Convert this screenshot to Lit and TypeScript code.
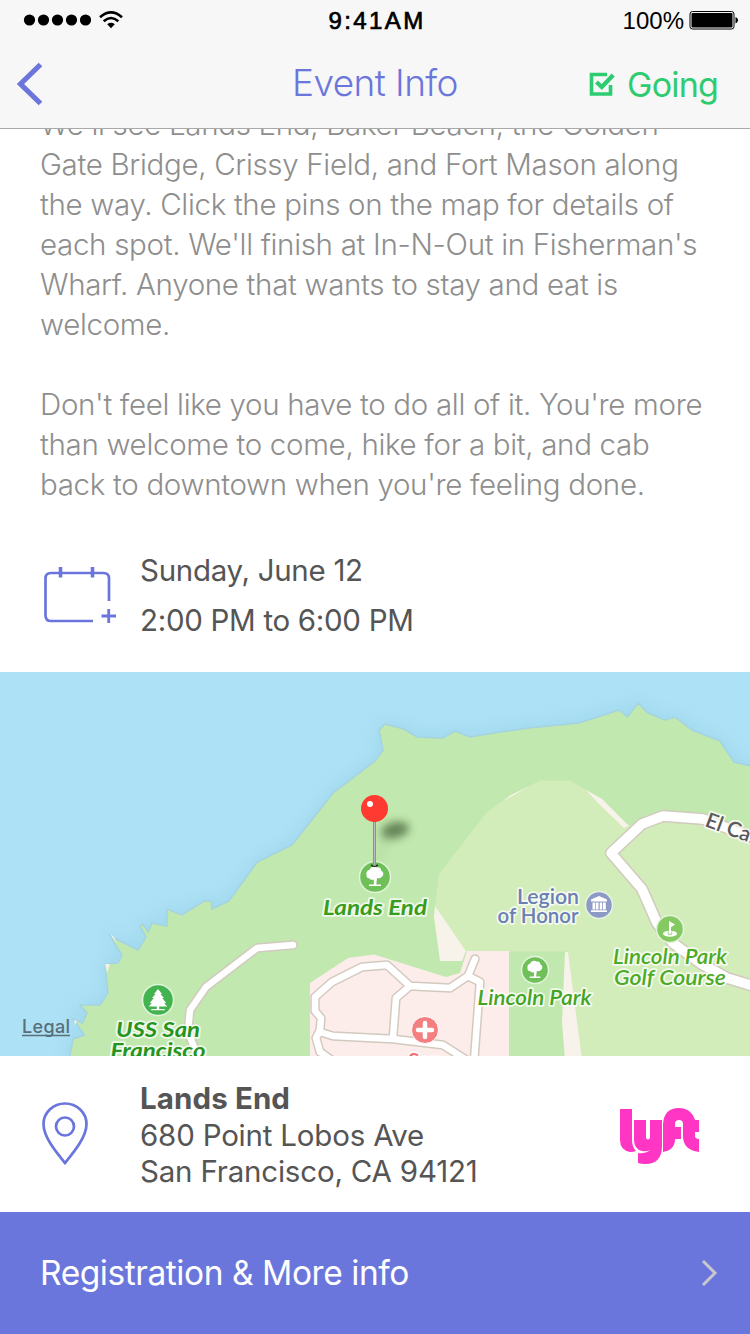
import { LitElement, html, css, svg } from "lit";
import { customElement } from "lit/decorators.js";

const DESCRIPTION = [
  "We'll see Lands End, Baker Beach, the Golden",
  "Gate Bridge, Crissy Field, and Fort Mason along",
  "the way. Click the pins on the map for details of",
  "each spot. We'll finish at In-N-Out in Fisherman's",
  "Wharf. Anyone that wants to stay and eat is",
  "welcome.",
  "",
  "Don't feel like you have to do all of it. You're more",
  "than welcome to come, hike for a bit, and cab",
  "back to downtown when you're feeling done.",
];

const COAST =
  "M69 1060L73 1039L84.5 1035L73 1019L82.5 1023L87 1013L80 1005L100 1005L108 993L105 964L118 963L122 955L109 934L114 938L138 950L146 937L140 926L143 924L148 932L152 923L167 926L167 909L182 915L204 901L211.500 901L212 909L229 901L250 872L257 862L292 845L333 793L375 761L383 750L379 730L385 724L404 729L417 737L443 738L455 731L470 737L500 732L529 728L579 723L619 710L627.500 717L638 703L648 713L665 720L675 717L692 730L720 741L734 762L760 768V1070H69Z";

const ROADS = [
  "M293 945L257 948L206 987L190 1010L188 1032L194 1047L204 1062",
  "M475 959L468 976L450 988L410 986L387 965L362 967L332 982L315 997L315 1011L321 1018L320 1030L316 1038L320 1052L340 1066",
  "M320 1032L333 1036L393 1039L443 1045L468 1061",
  "M410 986L396 998L393 1038",
  "M468 976L480 982L474 1062",
];
const MAIN_ROAD =
  "M765 842L727 828L703 819L663 816L642 824L611 853L642 889L657 923L673 943L700 963L727 978L760 988";

@customElement("event-map")
class EventMap extends LitElement {
  static styles = css`
    :host { display: block; height: 384px; }
    .map { display: block; width: 100%; height: 100%; }
    .road { fill: none; stroke-linejoin: round; stroke-linecap: round; }
    .edge { stroke: #d2cabf; }
    .core { stroke: #fff; }
    .label {
      font-family: Lato, "Open Sans", sans-serif;
      font-weight: 600;
      font-size: 21px;
      text-anchor: middle;
      paint-order: stroke;
      stroke: #fff;
      stroke-opacity: 0.75;
      stroke-width: 3.500px;
      stroke-linejoin: round;
    }
    .slant { font-style: italic; }
    .strong { font-weight: 700; }
    .street { text-anchor: start; }
    .legal {
      font: 500 18px Inter, sans-serif;
      fill: #586f78;
    }
  `;

  private tree(x: number, y: number, k: number) {
    return svg`<g transform="translate(${x} ${y}) scale(${k})" fill="#fff">
      <path d="M-8.500-2c-.6-3 1-5 3-5 1-3.500 5-4.500 7.500-2.600 3-.4 4.200 1.600 4.200 3.300 2.600 1 3 4.600.4 6.300-1 1.500-3 1.600-4.600 1L1.300 7.500H6V9H-6V7.500H-1.200V2.500C-3 3.200-5 2.700-5.500 1.200-7.500 1.500-8.800 0-8.500-2Z"/>
    </g>`;
  }

  render() {
    return html`<svg class="map" viewBox="0 672 750 384" role="img" aria-label="Map of Lands End">
      <defs>
        <filter id="shore" x="-10%" y="-10%" width="120%" height="120%"><feGaussianBlur stdDeviation="9" /></filter>
        <filter id="soft" x="-60%" y="-100%" width="220%" height="300%"><feGaussianBlur stdDeviation="4" /></filter>
      </defs>
      <rect y="672" width="750" height="384" fill="#ade1f6" />
      <path d=${COAST} fill="#90cde0" stroke="#90cde0" stroke-width="6" opacity=".45" filter="url(#shore)" />
      <path d=${COAST} fill="#c1e8ae" stroke="#a5d3df" stroke-width="1.500" />
      <path d="M110 934L114 937L117 944ZM105 964H110L107 973ZM74 1020L77 1021L75 1025Z" fill="#f3f0e6" />
      <path d="M439 874L487 812L508 797L540 780.500H570L590 792L628 826L663 816L703 819L765 842V1060H509V951H466L435 906Z" fill="#d2ecba" />
      <path d="M503 801L511 795L530 786L507 799ZM586 790L602 799L629 826L624 828L598 803ZM435 906L466 951L462 961H440L434 917Z" fill="#f8f3ea" />
      <path d="M310 983L348 958L374 954.500L446 977L460 973L467 951H509V1060H310Z" fill="#fcedea" />
      <path d="M509 951.500H567V1060H509Z" fill="#c1e8ae" />
      <path d="M565 952H568L582 1060H565L562 1022Z" fill="#f8f3ea" />
      ${ROADS.map((d) => svg`<path class="road edge" d=${d} stroke-width="9.500"/>`)}
      ${ROADS.map((d) => svg`<path class="road core" d=${d} stroke-width="6.500"/>`)}
      <path class="road edge" d=${MAIN_ROAD} stroke-width="12.500" />
      <path class="road core" d=${MAIN_ROAD} stroke-width="9.500" />

      <circle cx="158" cy="1000" r="15.500" fill="#42b34f" stroke="#e2f4dc" stroke-width="1.500" />
      <path fill="#fff" d="M158 989l4 5h-1.500l3.500 4h-1.800l4 5h-2l3 3.500h-8v2.500h5.500v1.300h-13.400v-1.300h5.500v-2.500h-8l3-3.500h-2l4-5h-1.800l3.500-4h-1.500z" />
      <text class="label slant strong" x="158" y="1036.500" fill="#259421" textLength="84" lengthAdjust="spacingAndGlyphs">USS San</text>
      <text class="label slant strong" x="158" y="1058" fill="#259421" textLength="95" lengthAdjust="spacingAndGlyphs">Francisco</text>

      <circle cx="375" cy="877" r="15.500" fill="#6fc058" stroke="#e2f4dc" stroke-width="1.500" />
      ${this.tree(375, 877, 1)}
      <text class="label slant strong" x="375" y="914.500" fill="#389d1b" textLength="104" lengthAdjust="spacingAndGlyphs">Lands End</text>
      <path d="M375 866l7-18q-7-16 9-22 20-6 18 2-3 8-21 13l-9 24z" fill="#426a35" opacity=".13" filter="url(#soft)" />
      <ellipse cx="395" cy="830" rx="14" ry="8" transform="rotate(-12 395 830)" fill="#34502c" opacity=".6" filter="url(#soft)" />
      <path d="M371 865q3.500 2.500 7 0" fill="none" stroke="#223a20" stroke-width="1.600" />
      <path d="M374.500 820V866" stroke="#8d8d92" stroke-width="3" />
      <path d="M374.500 822V865" stroke="#b9b9be" stroke-width="1.200" />
      <circle cx="374.500" cy="808.500" r="13.500" fill="#ff3a30" />
      <circle cx="370" cy="804" r="3" fill="#fff" />

      <circle cx="535" cy="970" r="13.500" fill="#6fc058" stroke="#e2f4dc" stroke-width="1.500" />
      ${this.tree(535, 970, 0.88)}
      <text class="label slant" x="534.500" y="1004.500" fill="#43a423" textLength="114" lengthAdjust="spacingAndGlyphs">Lincoln Park</text>

      <text class="label" x="548" y="903.500" fill="#6a80b4" textLength="62" lengthAdjust="spacingAndGlyphs">Legion</text>
      <text class="label" x="538" y="923" fill="#6a80b4" textLength="81" lengthAdjust="spacingAndGlyphs">of Honor</text>
      <circle cx="599" cy="905" r="13.500" fill="#8c9ac5" stroke="#e8f3df" stroke-width="1.500" />
      <path fill="#fff" d="M599 896l8 3.500v2h-16v-2zM592.500 902.500h2.800v7h-2.800zM596 902.500h2.500v7h-2.500zM599.700 902.500h2.500v7h-2.500zM603 902.500h2.800v7h-2.800zM591 910.300h16v1.800h-16z" />

      <circle cx="670" cy="929" r="13.500" fill="#84c962" stroke="#e2f4dc" stroke-width="1.500" />
      <ellipse cx="670" cy="933.700" rx="7" ry="3" fill="#fff" />
      <path d="M669 921l6 3.500-4 2.800v6.700h-2z" fill="#fff" />
      <path d="M668.200 931.500v2.800h3.600v-2.800" fill="none" stroke="#84c962" stroke-width=".8" />
      <text class="label slant" x="670" y="963.500" fill="#4cab25" textLength="114" lengthAdjust="spacingAndGlyphs">Lincoln Park</text>
      <text class="label slant" x="670" y="984.500" fill="#4cab25" textLength="112" lengthAdjust="spacingAndGlyphs">Golf Course</text>

      <circle cx="425" cy="1030" r="13.500" fill="#f37f80" stroke="#fff" stroke-width="1" />
      <path d="M425 1023v14M418 1030h14" stroke="#fff" stroke-width="4.500" stroke-linecap="round" />
      <text class="label" x="425" y="1067.500" fill="#ef6e70" textLength="34" lengthAdjust="spacingAndGlyphs">San</text>

      <text class="label street" transform="translate(704 826) rotate(20)" fill="#5a5a58">El Camino</text>
      <text class="legal" x="22" y="1033" textLength="48">Legal</text>
      <path d="M22 1035.500H70" stroke="#586f78" stroke-width="1.500" />
    </svg>`;
  }
}

@customElement("app-root")
class AppRoot extends LitElement {
  static styles = css`
    :host {
      display: flex;
      flex-direction: column;
      width: 750px;
      height: 1334px;
      overflow: hidden;
      background: #fff;
      color: #555;
      font-family: Inter, "Open Sans", sans-serif;
      white-space: nowrap;
    }
    * { box-sizing: border-box; }
    svg { display: block; flex: none; }
    .header {
      flex: none;
      height: 129px;
      background: #f7f7f7;
      border-bottom: 1px solid #a9a9a9;
    }
    .status, .nav {
      display: grid;
      grid-template-columns: 1fr auto 1fr;
      align-items: center;
    }
    .status {
      height: 40px;
      padding: 0 11px 0 23px;
      color: #000;
      font: 24px "Liberation Sans", sans-serif;
    }
    .signal { display: flex; align-items: center; gap: 8px; }
    .time {
      letter-spacing: 2.400px;
      -webkit-text-stroke: 0.7px #000;
      margin-left: -8px;
      padding-top: 2px;
    }
    .battery { display: flex; align-items: center; justify-content: flex-end; gap: 5px; }
    .percent { padding-top: 2px; }
    .nav { height: 88px; padding: 0 32px 0 16px; }
    .title {
      margin: 0;
      padding: 0 0 3px 16px;
      color: #6b76dc;
      font-size: 37px;
      font-weight: 300;
      letter-spacing: -0.6px;
    }
    .going {
      display: flex;
      align-items: center;
      justify-content: flex-end;
      gap: 12px;
      color: #2ecc71;
      font-size: 34px;
      letter-spacing: -0.8px;
    }
    .scroll { flex: none; height: 543px; overflow: hidden; padding: 0 40px; }
    .description {
      margin: -25px 0 41px;
      color: #8e8e8e;
      font-size: 29.500px;
      font-weight: 300;
      letter-spacing: -0.320px;
      line-height: 40px;
    }
    .line { height: 40px; }
    .when {
      display: grid;
      grid-template-columns: 100px 1fr;
      font-size: 29.500px;
      letter-spacing: -0.300px;
      line-height: 50px;
    }
    .calendar { margin: 20px 0 0 3px; }
    .where {
      flex: none;
      height: 156px;
      display: grid;
      grid-template-columns: 100px 1fr auto;
      align-items: center;
      padding: 0 50px 0 40px;
      font-size: 29.500px;
      letter-spacing: -0.200px;
      line-height: 36.500px;
    }
    .address { padding-top: 2px; }
    .place { font-weight: 700; letter-spacing: 0.100px; }
    .footer {
      flex: none;
      height: 122px;
      display: flex;
      align-items: center;
      justify-content: space-between;
      padding: 0 32px 0 40px;
      background: #6b76dc;
      color: #fff;
      font-size: 33.500px;
      letter-spacing: -0.440px;
    }
  `;

  render() {
    return html`
      <header class="header">
        <div class="status">
          <div class="signal">
            <svg width="68" height="12" viewBox="0 0 68 12">
              ${[6.5, 20.5, 34.5, 48.5, 62.5].map((x) => svg`<circle cx=${x} cy="6" r="5.600"/>`)}
            </svg>
            <svg width="24" height="18" viewBox="0 0 24 18">
              <g fill="none" stroke="#000" stroke-width="2.600">
                <path d="M1 6.200Q12-3.400 23 6.200" /><path d="M4.700 10.200Q12 3.800 19.300 10.200" />
              </g>
              <path d="M8.200 13.200Q12 10.500 15.800 13.200L12 17.300Z" />
            </svg>
          </div>
          <div class="time">9:41AM</div>
          <div class="battery">
            <span class="percent">100%</span>
            <svg width="50" height="20" viewBox="0 0 50 20">
              <rect x="1" y="1.500" width="44" height="17.500" rx="2.500" fill="none" stroke="#000" />
              <rect x="2.500" y="3" width="41" height="14.500" rx="1" />
              <path d="M46.500 7q2.500 1 2.500 3.200t-2.500 3.300z" />
            </svg>
          </div>
        </div>
        <div class="nav">
          <svg width="28" height="44" viewBox="0 0 28 44">
            <path d="M24.500 2.500L4.500 22L24.500 41.500" fill="none" stroke="#6b76dc" stroke-width="5.200" />
          </svg>
          <h1 class="title">Event Info</h1>
          <div class="going">
            <svg width="27" height="25" viewBox="0 0 27 25">
              <path d="M19 2.500H3.500V22H22.500V13" fill="none" stroke="#2ecc71" stroke-width="3.600" />
              <path d="M8.500 10.500L13.500 15.500L25 3.500" fill="none" stroke="#f7f7f7" stroke-width="7" />
              <path d="M8.500 10L13.800 15L25.200 3" fill="none" stroke="#2ecc71" stroke-width="4.300" />
            </svg>
            <span>Going</span>
          </div>
        </div>
      </header>
      <main class="scroll">
        <div class="description">${DESCRIPTION.map((t) => html`<div class="line">${t}</div>`)}</div>
        <section class="when">
          <svg class="calendar" width="75" height="62" viewBox="0 0 75 62">
            <g fill="none" stroke="#6b76dc">
              <path d="M66 36V13.500Q66 8 60.500 8H8Q2.500 8 2.500 13.500V50.500Q2.500 56 8 56H50" stroke-width="2.700" />
              <path d="M17.500 2V12.500M49.500 2V12.500" stroke-width="3.600" />
              <path d="M58.500 51H73M65.700 44V58" stroke-width="2.800" />
            </g>
          </svg>
          <div>
            <div>Sunday, June 12</div>
            <div>2:00 PM to 6:00 PM</div>
          </div>
        </section>
      </main>
      <event-map></event-map>
      <section class="where">
        <svg width="50" height="66" viewBox="0 0 50 66">
          <g fill="none" stroke="#6b76dc" stroke-width="2.700">
            <path d="M25 62C16 51 3.500 36 3.500 23A21.500 20.500 0 0 1 46.500 23C46.500 36 34 51 25 62Z" />
            <circle cx="25" cy="25.500" r="9" />
          </g>
        </svg>
        <div class="address">
          <div class="place">Lands End</div>
          <div>680 Point Lobos Ave</div>
          <div>San Francisco, CA 94121</div>
        </div>
        <svg width="80" height="60" viewBox="0 -3 80 60" role="img" aria-label="Lyft">
          <g fill="#ff35c4">
            <path d="M0 2H12V33Q12 40 16 44Q14 45 10 45Q0 43 0 33Z" />
            <path d="M14 13H26V31Q28 34 30 31V13H42V39Q42 57 25 57Q21 57 18 56V46Q25 47 30 43Q26 45 22 44Q14 42 14 33Z" />
            <path d="M43 45V17Q44 1 59 1Q71 1 75 13H79V25H75V30Q76 32 79 32V45Q63 43 63 29V17Q63 13 59 13Q55 13 55 17V20H61V32H55Q55 43 43 45Z" />
          </g>
        </svg>
      </section>
      <footer class="footer">
        <span>Registration &amp; More info</span>
        <svg width="17" height="28" viewBox="0 0 17 28">
          <path d="M2 2L14 14L2 26" fill="none" stroke="#c7c7cc" stroke-width="3" />
        </svg>
      </footer>
    `;
  }
}
